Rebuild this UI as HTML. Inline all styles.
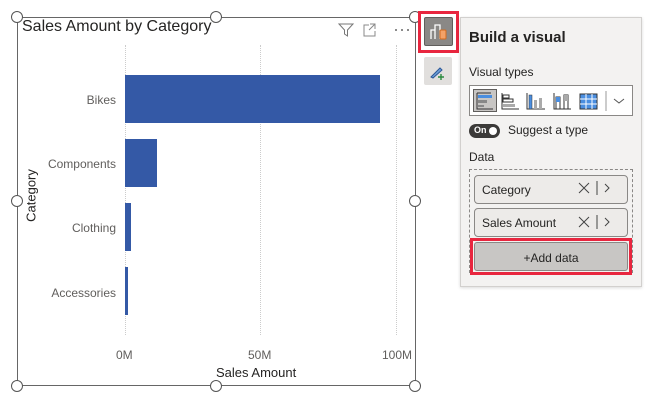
<!DOCTYPE html>
<html><head><style>
*{margin:0;padding:0;box-sizing:border-box}
body{width:658px;height:401px;background:#fff;font-family:"Liberation Sans",sans-serif;position:relative;overflow:hidden;color:#252423}
.a{position:absolute}
.h{position:absolute;width:12px;height:12px;border:1px solid #555;border-radius:50%;background:#fff}
.lbl{position:absolute;font-size:12px;color:#605e5c;text-align:right;width:100px}
.grid{position:absolute;top:45px;height:290px;border-left:1px dotted #ccc}
.pill{position:absolute;left:474px;width:154px;height:29px;border:1px solid #8a8886;border-radius:4px;background:#edebe9;font-size:12px;padding:7px 0 0 7px}
</style></head><body>
<div class="a" style="left:17px;top:17px;width:399px;height:369px;border:1px solid #666"></div>
<div class="h" style="left:11px;top:11px"></div><div class="h" style="left:210px;top:11px"></div><div class="h" style="left:409px;top:11px"></div>
<div class="h" style="left:11px;top:195px"></div><div class="h" style="left:409px;top:195px"></div>
<div class="h" style="left:11px;top:380px"></div><div class="h" style="left:210px;top:380px"></div><div class="h" style="left:409px;top:380px"></div>
<div class="a" style="left:22px;top:18px;font-size:16px">Sales Amount by Category</div>
<svg class="a" style="left:337px;top:22px" width="80" height="16"><path d="M2 2h14l-5.5 6v6l-3-2v-4z" fill="none" stroke="#777"/><path d="M32 3h-5v11h11v-5M33 2h5v5M38 2l-6 6" fill="none" stroke="#888"/><circle cx="59" cy="8" r="1" fill="#666"/><circle cx="65" cy="8" r="1" fill="#666"/><circle cx="71" cy="8" r="1" fill="#666"/></svg>
<div class="grid" style="left:125px"></div><div class="grid" style="left:260px"></div><div class="grid" style="left:396px"></div>
<div class="a" style="left:125px;top:75px;width:255px;height:48px;background:#3459a6"></div>
<div class="a" style="left:125px;top:139px;width:32px;height:48px;background:#3459a6"></div>
<div class="a" style="left:125px;top:203px;width:6px;height:48px;background:#3459a6"></div>
<div class="a" style="left:125px;top:267px;width:3px;height:48px;background:#3459a6"></div>
<div class="lbl" style="left:16px;top:93px">Bikes</div>
<div class="lbl" style="left:16px;top:157px">Components</div>
<div class="lbl" style="left:16px;top:221px">Clothing</div>
<div class="lbl" style="left:16px;top:286px">Accessories</div>
<div class="a" style="left:116px;top:348px;font-size:12px;color:#605e5c">0M</div>
<div class="a" style="left:248px;top:348px;font-size:12px;color:#605e5c">50M</div>
<div class="a" style="left:382px;top:348px;font-size:12px;color:#605e5c">100M</div>
<div class="a" style="left:216px;top:365px;font-size:13px">Sales Amount</div>
<div class="a" style="left:-4px;top:188px;font-size:13px;transform:rotate(-90deg);width:70px;text-align:center">Category</div>
<div class="a" style="left:418px;top:11px;width:41px;height:42px;border:3px solid #e8263f"></div>
<div class="a" style="left:424px;top:17px;width:29px;height:29px;background:#8a8886;border:1px solid #605e5c;border-radius:2px"></div>
<svg class="a" style="left:428px;top:20px" width="22" height="22"><path d="M3 19V10h4v9M7 19V5h5v14" fill="none" stroke="#fff" stroke-width="1.3"/><rect x="12" y="10" width="6" height="9" rx="1" fill="#f3a268" stroke="#d26b1f"/></svg>
<div class="a" style="left:424px;top:57px;width:28px;height:28px;background:#e1dfdd;border-radius:2px"></div>
<svg class="a" style="left:427px;top:60px" width="22" height="22"><path d="M4 17l9-9 2 2-9 8z" fill="#6fa0d8" stroke="#2b5797"/><path d="M14 14v6M11 17h6" stroke="#2b8a3e" stroke-width="1.4"/></svg>
<div class="a" style="left:460px;top:17px;width:182px;height:270px;background:#f3f2f1;border:1px solid #d2d0ce;box-shadow:0 1px 3px rgba(0,0,0,.15)"></div>
<div class="a" style="left:469px;top:29px;font-size:15px;font-weight:bold">Build a visual</div>
<div class="a" style="left:469px;top:65px;font-size:12px">Visual types</div>
<div class="a" style="left:469px;top:85px;width:164px;height:31px;border:1px solid #8a8886;background:#fff"></div>
<div class="a" style="left:473px;top:89px;width:24px;height:23px;background:#c8c6c4;border:1px solid #605e5c"></div>
<svg class="a" style="left:474px;top:89px" width="160" height="24">
<path d="M3 4h14M3 4v16h16" stroke="#333" fill="none"/><rect x="4" y="6" width="14" height="3" fill="#4a8ee0"/><rect x="4" y="11" width="9" height="3" fill="#888"/><rect x="4" y="16" width="6" height="2" fill="#888"/>
<path d="M28 4v16h17" stroke="#333" fill="none"/><rect x="29" y="6" width="6" height="3" fill="none" stroke="#333"/><rect x="29" y="10" width="10" height="3" fill="none" stroke="#333"/><rect x="29" y="15" width="12" height="3" fill="#aaa"/>
<path d="M53 4v16h18" stroke="#333" fill="none"/><rect x="55" y="6" width="3" height="14" fill="#4a8ee0" stroke="#333" stroke-width=".5"/><rect x="60" y="11" width="3" height="9" fill="#aaa"/><rect x="65" y="9" width="3" height="11" fill="#aaa"/>
<path d="M80 4v16h17" stroke="#333" fill="none"/><rect x="82" y="8" width="4" height="12" fill="none" stroke="#333"/><rect x="82" y="8" width="4" height="5" fill="#4a8ee0"/><rect x="90" y="6" width="4" height="14" fill="none" stroke="#333"/><rect x="90" y="6" width="4" height="6" fill="#aaa"/>
<rect x="106" y="5" width="17" height="15" fill="#4a8ee0" stroke="#333"/><path d="M106 10h17M106 15h17M112 5v15M118 5v15" stroke="#fff"/>
<path d="M132 2v20" stroke="#999"/><path d="M140 10l5 4 5-4" stroke="#555" fill="none"/>
</svg>
<div class="a" style="left:469px;top:124px;width:31px;height:14px;background:#3b3a39;border-radius:7px;color:#fff;font-size:9px;font-weight:bold;padding:1px 0 0 5px">On</div>
<div class="a" style="left:489px;top:127px;width:8px;height:8px;background:#fff;border-radius:50%"></div>
<div class="a" style="left:508px;top:123px;font-size:12px">Suggest a type</div>
<div class="a" style="left:469px;top:150px;font-size:12px">Data</div>
<div class="a" style="left:469px;top:169px;width:164px;height:104px;border:1px dashed #8a8886"></div>
<div class="pill" style="top:175px">Category</div>
<div class="pill" style="top:208px">Sales Amount</div>
<svg class="a" style="left:576px;top:180px" width="50" height="55"><g stroke="#444" fill="none"><path d="M3 3l10 10M13 3L3 13M21 1v14M29 4l4 4-4 4"/><path d="M3 37l10 10M13 37L3 47M21 35v14M29 38l4 4-4 4"/></g></svg>
<div class="a" style="left:470px;top:238px;width:162px;height:37px;border:3px solid #e8263f"></div>
<div class="a" style="left:474px;top:242px;width:154px;height:29px;background:#c8c6c4;border:1px solid #8a8886;border-radius:3px;font-size:12px;text-align:center;padding-top:8px">+Add data</div>
</body></html>
